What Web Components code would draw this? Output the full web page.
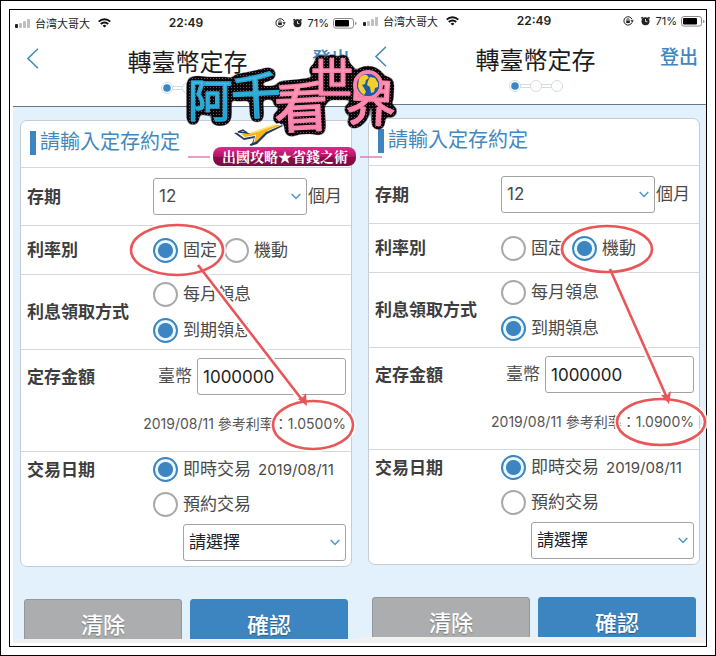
<!DOCTYPE html>
<html lang="zh-Hant">
<head>
    <meta charset="UTF-8">
    <meta name="viewport" content="width=device-width, initial-scale=1.0">
    <title>轉臺幣定存</title>
    <style>
        * { box-sizing: border-box; }
        body {
            margin: 0;
            font-family: Inter, "Noto Sans CJK TC", sans-serif;
            color: #4a4a4a;
            background: #fff;
        }
    </style>
</head>
<body>
<photo-frame>
    <bank-screen class="first">
        <status-bar></status-bar>
        <screen-header>轉臺幣定存</screen-header>
        <deposit-form rate="fixed" percent="1.0500%"></deposit-form>
    </bank-screen>
    <bank-screen class="second">
        <status-bar></status-bar>
        <screen-header>轉臺幣定存</screen-header>
        <deposit-form rate="floating" percent="1.0900%"></deposit-form>
    </bank-screen>
    <rate-marks slot="over"></rate-marks>
    <blog-logo slot="over"></blog-logo>
</photo-frame>

<script>
    function define(name, html, setup) {
        const template = document.createElement('template');
        template.innerHTML = html;

        window.customElements.define(name, class extends HTMLElement {
            constructor() {
                super();
                this._shadowRoot = this.attachShadow({ mode: 'open' });
                this._shadowRoot.appendChild(template.content.cloneNode(true));
            }

            connectedCallback() {
                if (setup) setup(this, this._shadowRoot);
            }
        });
    }

    // double black frame with the screens side by side
    define('photo-frame', `
        <style>
            * { box-sizing: border-box; }
            :host {
                display: flex;
                box-sizing: border-box;
                position: relative;
                height: 100vh;
                padding: 8px;
                border: 1px solid #000;
            }
            .inner {
                flex: 1;
                display: flex;
                min-height: 0;
                padding: 0 0 3px 3px;
                border: 1px solid #000;
            }
            .screens {
                flex: 1;
                display: grid;
                grid-template-columns: 348fr 345fr;
                grid-template-rows: minmax(0, 1fr);
                min-width: 0;
                padding-bottom: 4px;
                background: #f1f1f0;
            }
            ::slotted(.first) { border-top: 2px solid #fff; --edge: 10px; }
            ::slotted(.second) { margin-bottom: 2px; --edge: 7px; }
        </style>
        <div class="inner"><div class="screens"><slot></slot></div></div>
        <slot name="over"></slot>
    `);

    define('bank-screen', `
        <style>
            :host {
                display: block;
                box-sizing: border-box;
                min-width: 0;
                overflow: hidden;
                background: #e2f1fc;
            }
        </style>
        <slot></slot>
    `);

    define('status-bar', `
        <style>
            :host {
                display: grid;
                grid-template-columns: 1fr auto 1fr;
                align-items: center;
                height: 22px;
                padding: 0 calc(var(--edge) - 6px) 0 2px;
                background: #fff;
                color: #222;
                font-size: 11px;
                line-height: 16px;
            }
            div { display: flex; align-items: center; }
            .carrier { font: 11px/16px "Noto Sans CJK SC", sans-serif; margin: 0 8px 0 4px; }
            .time { font: 600 12px/16px Inter, sans-serif; }
            .right { justify-content: flex-end; }
            .percent { margin: 0 4px; }
            .alarm { margin-left: 6px; }
        </style>
        <div>
            <svg width="16" height="9" viewBox="0 0 16 9">
                <rect y="5" width="3" height="4" rx="1" fill="#222"/>
                <rect x="4" y="4" width="3" height="5" rx="1" fill="#c0c0c0"/>
                <rect x="8" y="2" width="3" height="7" rx="1" fill="#c0c0c0"/>
                <rect x="12" width="3" height="9" rx="1" fill="#c0c0c0"/>
            </svg>
            <span class="carrier">台湾大哥大</span>
            <svg width="13" height="10" viewBox="0 0 13 10" fill="none" stroke="#111" stroke-width="1.9">
                <path d="M.7 3.6a8.3 8.3 0 0 1 11.6 0M2.8 6a5.2 5.2 0 0 1 7.4 0"/>
                <path d="M6.5 9.6 4.6 7.7a2.7 2.7 0 0 1 3.8 0z" fill="#111" stroke="none"/>
            </svg>
        </div>
        <span class="time">22:49</span>
        <div class="right">
            <svg width="11" height="10" viewBox="0 0 11 10" fill="none" stroke="#222">
                <path d="M9 6.5A4.2 4.2 0 1 1 9 3.3"/>
                <path d="M7.4 4.3h3.4L9.2 6.4z" fill="#222" stroke="none"/>
                <rect x="3.2" y="4.5" width="3.6" height="2.6" fill="#222" stroke="none"/>
                <path d="M3.9 4.6V3.7a1.1 1.1 0 0 1 2.2 0v.9" stroke-width=".8"/>
            </svg>
            <svg class="alarm" width="11" height="10" viewBox="0 0 11 10">
                <circle cx="5.5" cy="5.3" r="4" fill="#222"/>
                <path d="M1.4 2.4 2.8 1.2M9.6 2.4 8.2 1.2" stroke="#222" stroke-width="1.4"/>
                <path d="M5.5 3v2.6H7.4" fill="none" stroke="#fff" stroke-width=".8"/>
            </svg>
            <span class="percent">71%</span>
            <svg width="24" height="11" viewBox="0 0 24 11">
                <rect x=".5" y=".5" width="20" height="9.6" rx="2.4" fill="#fff" stroke="#8a8a8a"/>
                <rect x="2" y="2" width="14" height="6.6" rx="1" fill="#000"/>
                <path d="M22 3.6v3.6q1.6-.6 1.6-1.8T22 3.6z" fill="#999"/>
            </svg>
        </div>
    `);

    define('screen-header', `
        <style>
            * { box-sizing: border-box; }
            :host {
                display: grid;
                grid-template-columns: 1fr auto 1fr;
                align-items: start;
                box-sizing: border-box;
                height: 73px;
                padding: 11px calc(var(--edge) + 1px) 0 12px;
                background: #fff;
                border-bottom: 1px solid #64798c;
            }
            h1 {
                margin: 0;
                font-size: 24px;
                font-weight: 400;
                line-height: 36px;
                color: #1c1c1c;
                white-space: nowrap;
            }
            .middle { display: grid; justify-items: center; }
            button { justify-self: start; padding: 3px 2px; border: 0; background: none; line-height: 0; }
            a { justify-self: end; color: #3f87c0; font-size: 19px; font-weight: 500; line-height: 30px; text-decoration: none; }
        </style>
        <button aria-label="返回">
            <svg width="12" height="21" viewBox="0 0 12 21" fill="none" stroke="#4b8cbc" stroke-width="1.6">
                <path d="M11 .8 1 10.5l10 9.7"/>
            </svg>
        </button>
        <div class="middle">
            <h1><slot></slot></h1>
            <svg width="54" height="14" viewBox="0 0 54 14" fill="#fff" stroke="#d3dde2">
                <path d="M10 5.5h34M10 8.5h34"/>
                <circle cx="6" cy="7" r="5.5" stroke="#c7def0"/>
                <circle cx="27" cy="7" r="5.5"/>
                <circle cx="48" cy="7" r="5.5"/>
                <path d="M22 7h10M43 7h6" stroke="#fff" stroke-width="2"/>
                <circle cx="6" cy="7" r="3.8" fill="#3d85c0" stroke="none"/>
            </svg>
        </div>
        <a href="#">登出</a>
    `);

    define('form-row', `
        <style>
            :host {
                display: grid;
                grid-template-columns: 126px minmax(0, 1fr);
                align-items: center;
                box-sizing: border-box;
                padding: 0 5px 0 6px;
                border-top: 1px solid #d5d8da;
            }
            .label { color: #3d3d3d; font-size: 17px; font-weight: 700; line-height: 26px; white-space: nowrap; }
            ::slotted([slot="note"]) { grid-column: 1 / -1; }
        </style>
        <div class="label"><slot name="label"></slot></div>
        <slot></slot>
        <slot name="note"></slot>
    `);

    define('deposit-form', `
        <style>
            * { box-sizing: border-box; }
            :host { display: block; font-size: 17px; line-height: 25px; }
            .card {
                margin: 13px calc(var(--edge) - 1px) 0 7px;
                background: #fff;
                border: 1px solid #c5cdd2;
                border-radius: 7px;
            }
            h2 {
                display: flex;
                align-items: center;
                gap: 4px;
                height: 46px;
                margin: 0;
                padding: 0 9px 3px;
                color: #4288c0;
                font-size: 20px;
                font-weight: 400;
                white-space: nowrap;
            }
            h2::before { content: ""; width: 6px; height: 24px; background: #3d85c0; }
            .period { height: 58px; }
            .rate { height: 49px; }
            .interest { height: 75px; }
            .amount { padding-top: 8px; height: 102px; align-content: start; }
            .date { height: 115px; padding-top: 5px; align-items: start; }
            .line { display: flex; align-items: center; white-space: nowrap; }
            .stack { display: grid; gap: 11px; }
            .date .stack { gap: 10px; }
            .option { display: flex; align-items: center; gap: 5px; margin-right: 7px; white-space: nowrap; }
            .option time { font-size: 15px; margin-left: 2px; }
            input[type="radio"] {
                appearance: none;
                flex: none;
                width: 25px;
                height: 25px;
                margin: 0;
                border: 2px solid #a9a9a9;
                border-radius: 50%;
                background: #fff;
            }
            input[type="radio"]:checked {
                border-color: #3d85c0;
                background: radial-gradient(circle, #3d85c0 7px, #e9f8ff 8px);
            }
            .select { position: relative; display: block; }
            .select svg { position: absolute; right: 6px; top: 15px; pointer-events: none; }
            select, input[type="text"] {
                appearance: none;
                display: block;
                width: 100%;
                height: 37px;
                margin: 0;
                padding: 0 5px;
                border: 1px solid #a3a3a3;
                border-radius: 3px;
                background: #fff;
                color: #4a4a4a;
                font: 17px/25px Inter, "Noto Sans CJK TC", sans-serif;
            }
            .months { width: 154px; margin-right: 1px; }
            input[type="text"] { color: #222; }
            .currency { padding: 0 5px; }
            .field { flex: 1; min-width: 0; }
            .note { margin: 19px 0 0; font-size: 14px; line-height: 20px; text-align: right; color: #555; white-space: nowrap; }
            .reserve { margin: -3px 0 0 30px; }
            .reserve select { color: #222; }
            .buttons { display: grid; grid-template-columns: 1fr 1fr; gap: 8px; padding: 32px calc(var(--edge) + 3px) 0 11px; }
            button {
                height: 52px;
                padding: 0 0 4px;
                border: 1px solid #949698;
                border-radius: 3px;
                background: #abadaf;
                color: #fff;
                font: 500 22px/30px "Noto Sans CJK TC", sans-serif;
                text-shadow: 0 1px 1px rgba(0, 0, 0, .3);
            }
            button.ok { border-color: #3d85c0; background: #3d85c0; }
        </style>
        <form>
            <div class="card">
                <h2>請輸入定存約定</h2>
                <form-row class="period">
                    <label slot="label" for="months">存期</label>
                    <div class="line">
                        <span class="select months">
                            <select id="months"><option>12</option></select>
                            <svg width="10" height="7" viewBox="0 0 10 7" fill="none" stroke="#4c96c8" stroke-width="1.5"><path d="m.7 1 4.3 4.4L9.3 1"/></svg>
                        </span>
                        <span>個月</span>
                    </div>
                </form-row>
                <form-row class="rate">
                    <span slot="label">利率別</span>
                    <div class="line">
                        <label class="option"><input type="radio" name="rate" value="fixed">固定</label>
                        <label class="option"><input type="radio" name="rate" value="floating">機動</label>
                    </div>
                </form-row>
                <form-row class="interest">
                    <span slot="label">利息領取方式</span>
                    <div class="stack">
                        <label class="option"><input type="radio" name="interest">每月領息</label>
                        <label class="option"><input type="radio" name="interest" checked>到期領息</label>
                    </div>
                </form-row>
                <form-row class="amount">
                    <label slot="label" for="amount">定存金額</label>
                    <div class="line">
                        <span class="currency">臺幣</span>
                        <span class="field"><input type="text" id="amount" value="1000000"></span>
                    </div>
                    <p class="note" slot="note">2019/08/11 參考利率：<span class="percent"></span></p>
                </form-row>
                <form-row class="date">
                    <span slot="label">交易日期</span>
                    <div class="stack">
                        <label class="option"><input type="radio" name="date" checked>即時交易 <time>2019/08/11</time></label>
                        <label class="option"><input type="radio" name="date">預約交易</label>
                        <span class="select reserve">
                            <select aria-label="預約交易日期"><option>請選擇</option></select>
                            <svg width="10" height="7" viewBox="0 0 10 7" fill="none" stroke="#4c96c8" stroke-width="1.5"><path d="m.7 1 4.3 4.4L9.3 1"/></svg>
                        </span>
                    </div>
                </form-row>
            </div>
            <div class="buttons">
                <button type="reset">清除</button>
                <button type="button" class="ok">確認</button>
            </div>
        </form>
    `, (host, root) => {
        root.querySelector('input[value="' + host.getAttribute('rate') + '"]').checked = true;
        root.querySelector('.percent').textContent = host.getAttribute('percent');
    });

    // red circles and arrows from the rate type to its percentage
    define('rate-marks', `
        <style>
            :host { position: absolute; left: -1px; top: -1px; pointer-events: none; }
            svg { display: block; }
        </style>
        <svg width="716" height="656" viewBox="0 0 716 656" fill="none">
            <g stroke="#fff" stroke-width="7">
                <path d="M198 265 302 400M610 269l56 127"/>
            </g>
            <g stroke="#fff" stroke-width="6" opacity=".85">
                <ellipse cx="177" cy="250" rx="46" ry="25"/>
                <ellipse cx="313" cy="425" rx="40" ry="24"/>
                <ellipse cx="607" cy="249" rx="45" ry="23"/>
                <ellipse cx="661" cy="422" rx="44" ry="23"/>
            </g>
            <g stroke="#ea5558" stroke-width="2.6">
                <ellipse cx="177" cy="250" rx="46" ry="25"/>
                <ellipse cx="313" cy="425" rx="40" ry="24"/>
                <ellipse cx="607" cy="249" rx="45" ry="23"/>
                <ellipse cx="661" cy="422" rx="44" ry="23"/>
                <path d="M198 265 303 401M610 269l57 129"/>
            </g>
            <path d="m307 406-1-13-3 4-5 2zM669 404l2-13-4 4-6 0z" fill="#ea5558"/>
        </svg>
    `);

    define('blog-logo', `
        <style>
            :host { position: absolute; left: 179px; top: 44px; pointer-events: none; }
            svg { display: block; }
            text { font-family: "Noto Sans CJK TC", sans-serif; text-anchor: middle; }
            .name { font-weight: 400; stroke-width: 1.6; stroke-linejoin: round; }
            .tag { font: 700 14px "Noto Serif CJK TC", "Noto Sans CJK TC", serif; fill: #fff; }
        </style>
        <svg width="220" height="130" viewBox="180 45 220 130">
            <defs>
                <linearGradient id="blue" x1="0" y1="0" x2="0" y2="1">
                    <stop offset="0" stop-color="#5cc8ea"/><stop offset="1" stop-color="#1592c8"/>
                </linearGradient>
                <linearGradient id="pink" x1="0" y1="0" x2="0" y2="1">
                    <stop offset="0" stop-color="#ffa9b4"/><stop offset="1" stop-color="#fa7ab8"/>
                </linearGradient>
                <linearGradient id="wine" x1="0" y1="0" x2="0" y2="1">
                    <stop offset="0" stop-color="#df2a8c"/><stop offset=".5" stop-color="#b51266"/>
                    <stop offset=".52" stop-color="#8c0c4c"/><stop offset="1" stop-color="#7a0c43"/>
                </linearGradient>
                <!-- round black rim with a fine dot texture -->
                <filter id="rim" filterUnits="userSpaceOnUse" x="180" y="45" width="220" height="130" color-interpolation-filters="sRGB">
                    <feGaussianBlur in="SourceAlpha" stdDeviation="3"/>
                    <feComponentTransfer result="fat"><feFuncA type="linear" slope="16" intercept="-1"/></feComponentTransfer>
                    <feFlood flood-color="#0c0509" result="ink"/>
                    <feComposite in="ink" in2="fat" operator="in" result="black"/>
                    <feFlood x="180" y="45" width="1" height="1" flood-color="#6b5560"/>
                    <feOffset x="180" y="45" width="3" height="3"/>
                    <feTile result="dots"/>
                    <feComposite in="dots" in2="fat" operator="in" result="grain"/>
                    <feMerge>
                        <feMergeNode in="black"/><feMergeNode in="grain"/><feMergeNode in="SourceGraphic"/>
                    </feMerge>
                </filter>
            </defs>
            <g filter="url(#rim)">
                <g class="name" fill="url(#blue)" stroke="#27a9d6">
                    <text x="210" y="117" font-size="44">阿</text>
                    <text x="256" y="114" font-size="50" transform="rotate(-3 256 95)">千</text>
                </g>
                <g class="name" fill="url(#pink)" stroke="#fb83a8">
                    <text x="301" y="127" font-size="54" transform="rotate(-3 301 105)">看</text>
                    <text x="332" y="94" font-size="42">世</text>
                    <text x="371" y="121" font-size="50" transform="rotate(3 370 100)">界</text>
                </g>
                <circle cx="368" cy="85" r="13" fill="#24519a" stroke="#fb86ad" stroke-width="4"/>
            </g>
            <circle cx="368" cy="85" r="11" fill="#1d5aa8"/>
            <path d="M359 79q3-5 8-4l2 3-3 2-1 4-3 1 2 3 2 4-2 3q-5-3-6-9zM370 77l5 1 3 5 0 4-3 1-1 4-3 1-1-6-3-2 1-4z" fill="#f3cf2c"/>
            <path d="m234 133 14-2 10 1 22-9 3 3-16 8-10 10-6 2 3-8-10 2z" fill="#20395c"/>
            <path d="m236 132 12-1 11 0 20-8 3 2-16 7-9 10-4 2 2-8-11 2z" fill="#fff"/>
            <path d="m241 134 16-2 19-7 5 0-14 6-9 11-4 1 2-8-11 2z" fill="#f8b51c"/>
            <path d="m251 133 24-8" stroke="#fbe36a" stroke-width="1.5"/>
            <path d="m238 132 5-2 4 3zM250 145l7-3 10-10" fill="none" stroke="#20395c" stroke-width="1.5"/>
            <path d="M188 157h22M360 157h22" stroke="#e27db5" stroke-width="1.5"/>
            <rect x="213" y="147" width="143" height="19" rx="8" fill="url(#wine)"/>
            <text class="tag" x="285" y="162">出國攻略★省錢之術</text>
        </svg>
    `);
</script>
</body>
</html>
